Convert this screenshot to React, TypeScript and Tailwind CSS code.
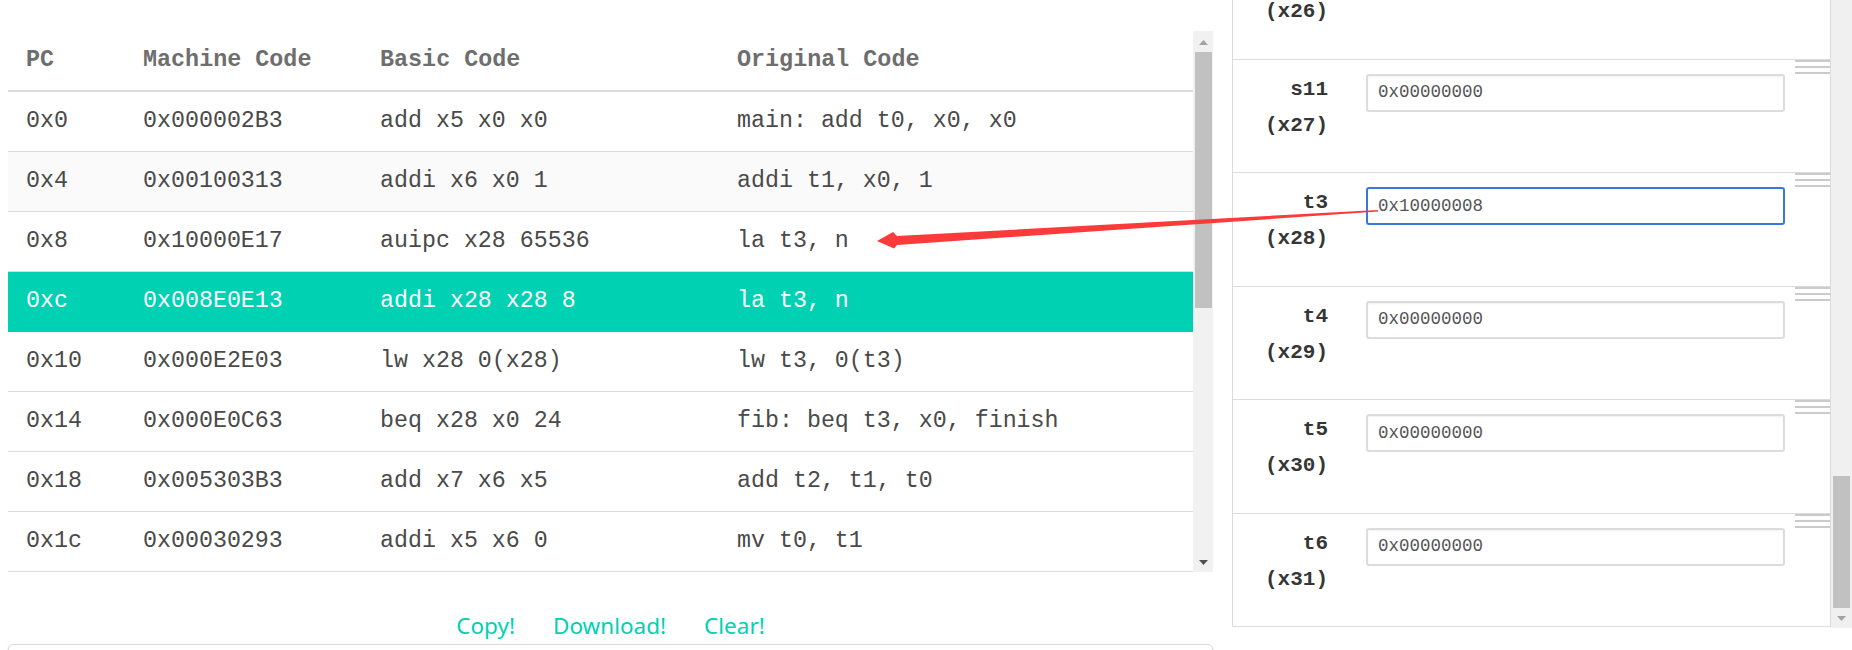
import React from "react";

const rows = [
  { pc: "0x0", mc: "0x000002B3", basic: "add x5 x0 x0", orig: "main: add t0, x0, x0" },
  { pc: "0x4", mc: "0x00100313", basic: "addi x6 x0 1", orig: "addi t1, x0, 1", hover: true },
  { pc: "0x8", mc: "0x10000E17", basic: "auipc x28 65536", orig: "la t3, n" },
  { pc: "0xc", mc: "0x008E0E13", basic: "addi x28 x28 8", orig: "la t3, n", sel: true },
  { pc: "0x10", mc: "0x000E2E03", basic: "lw x28 0(x28)", orig: "lw t3, 0(t3)" },
  { pc: "0x14", mc: "0x000E0C63", basic: "beq x28 x0 24", orig: "fib: beq t3, x0, finish" },
  { pc: "0x18", mc: "0x005303B3", basic: "add x7 x6 x5", orig: "add t2, t1, t0" },
  { pc: "0x1c", mc: "0x00030293", basic: "addi x5 x6 0", orig: "mv t0, t1" },
];

const regs = [
  { name: "s10", x: "(x26)", val: "0x00000000" },
  { name: "s11", x: "(x27)", val: "0x00000000" },
  { name: "t3", x: "(x28)", val: "0x10000008", focus: true },
  { name: "t4", x: "(x29)", val: "0x00000000" },
  { name: "t5", x: "(x30)", val: "0x00000000" },
  { name: "t6", x: "(x31)", val: "0x00000000" },
];

const mono = { fontFamily: '"Liberation Mono", "Courier New", monospace' };

function Tri({ up, color }: { up?: boolean; color: string }) {
  return (
    <svg width="9" height="5" viewBox="0 0 9 5">
      {up ? <polygon points="0,5 9,5 4.5,0" fill={color} /> : <polygon points="0,0 9,0 4.5,5" fill={color} />}
    </svg>
  );
}

export default function App() {
  return (
    <div className="relative w-[1852px] h-[650px] overflow-hidden bg-white flex">
      {/* Left column */}
      <div className="w-[1213px] pl-[8px] pt-[31px] flex flex-col shrink-0">
        <div className="flex h-[541px] shrink-0">
          <div className="flex-1 overflow-hidden" style={mono}>
            <div className="flex h-[61px] items-center border-b-2 border-[#dbdbdb] text-[23.4px] font-bold text-[#6e6e6e]">
              <div className="w-[117px] pl-[18px]">PC</div>
              <div className="w-[237px] pl-[18px]">Machine Code</div>
              <div className="w-[357px] pl-[18px]">Basic Code</div>
              <div className="flex-1 pl-[18px]">Original Code</div>
            </div>
            {rows.map((r) => (
              <div
                key={r.pc}
                className={
                  "flex h-[60px] items-center border-b text-[23.3px] whitespace-pre " +
                  (r.sel
                    ? "bg-[#00d1b2] border-[#00d1b2] text-white"
                    : r.hover
                    ? "bg-[#fafafa] border-[#dbdbdb] text-[#4a4a4a]"
                    : "bg-white border-[#dbdbdb] text-[#4a4a4a]")
                }
              >
                <div className="w-[117px] pl-[18px]">{r.pc}</div>
                <div className="w-[237px] pl-[18px]">{r.mc}</div>
                <div className="w-[357px] pl-[18px]">{r.basic}</div>
                <div className="flex-1 pl-[18px]">{r.orig}</div>
              </div>
            ))}
          </div>
          <div className="w-[20px] bg-[#f1f1f1] flex flex-col items-center">
            <div className="h-[21px] flex items-center justify-center pt-[1px]">
              <Tri up color="#a3a3a3" />
            </div>
            <div className="w-[17px] h-[256px] bg-[#c1c1c1]" />
            <div className="flex-1" />
            <div className="h-[20px] flex items-center justify-center">
              <Tri color="#505050" />
            </div>
          </div>
        </div>
        <div
          className="h-[72px] shrink-0 flex justify-center items-end gap-[38px] pb-[3px] text-[22.5px] leading-[30px] text-[#00d1b2]"
          style={{ fontFamily: '"Noto Sans", "Open Sans", sans-serif' }}
        >
          <span>Copy!</span>
          <span>Download!</span>
          <span>Clear!</span>
        </div>
        <div className="h-[20px] shrink-0 border border-[#dbdbdb] rounded-t-[5px] shadow-[0_1px_3px_rgba(0,0,0,0.12)]" />
      </div>

      {/* gap */}
      <div className="w-[19px] shrink-0" />

      {/* Right column */}
      <div className="flex shrink-0 h-[628px] items-start">
        <div className="w-[599px] h-[627px] overflow-hidden border-l border-r border-[#dbdbdb]">
          <div className="-mt-[54px]">
            {regs.map((g) => (
              <div key={g.name} className="relative h-[113.5px] border-b border-[#dbdbdb] flex items-start">
                <div className="absolute right-0 top-0 w-[35px] flex flex-col gap-[4px]">
                  <div className="h-[2px] bg-[#cbcbcb]" />
                  <div className="h-[2px] bg-[#cbcbcb]" />
                  <div className="h-[2px] bg-[#cbcbcb]" />
                </div>
                <div
                  className="w-[95px] pt-[12px] flex flex-col items-end text-[21px] leading-[36px] font-bold text-[#363636]"
                  style={mono}
                >
                  <span>{g.name}</span>
                  <span>{g.x}</span>
                </div>
                <div
                  className={
                    "ml-[38px] mt-[14px] w-[419px] h-[38px] rounded-[3px] flex items-center px-[10px] text-[17.5px] text-[#555] " +
                    (g.focus
                      ? "border-2 border-[#3a76dc]"
                      : "border-2 border-[#dcdcdc] shadow-[inset_0_1px_2px_rgba(10,10,10,0.06)]")
                  }
                  style={mono}
                >
                  {g.val}
                </div>
              </div>
            ))}
          </div>
        </div>
        <div className="w-[21px] h-[628px] bg-[#f0f0f0] flex flex-col items-center">
          <div className="h-[476px]" />
          <div className="w-[17px] h-[132px] bg-[#c1c1c1]" />
          <div className="h-[20px] flex items-center justify-center">
            <Tri color="#a3a3a3" />
          </div>
        </div>
      </div>

      {/* annotation arrow */}
      <svg className="absolute left-0 top-0 pointer-events-none" width="1852" height="650" viewBox="0 0 1852 650">
        <polygon
          points="1378,210 897,236 893,232 877,241 894,248.5 897,245 1378,211.5"
          fill="#fb3a3a"
        />
      </svg>
    </div>
  );
}
